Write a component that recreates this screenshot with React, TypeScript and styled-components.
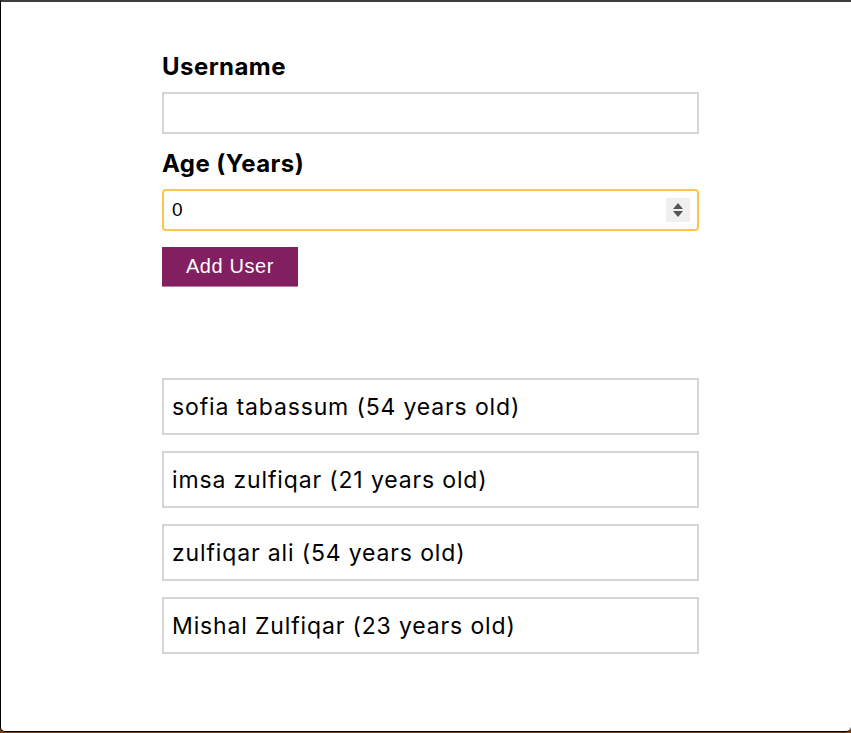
import React from "react";
import styled, { createGlobalStyle } from "styled-components";

const Global = createGlobalStyle`
  html, body { margin: 0; padding: 0; background: #7a3f14; }
  body { font-family: "Inter", "Noto Sans", sans-serif; }
  * { box-sizing: border-box; }
`;

const Frame = styled.div`
  height: 732px;
  background: #ffffff;
  border-top: 2px solid #3d3d3f;
  border-left: 1px solid #000;
  border-bottom: 1px solid #000;
  border-bottom-left-radius: 5px;
  border-bottom-right-radius: 5px;
  padding: 50px 0 0 161px;
`;

const Column = styled.div`
  width: 537px;
`;

const Form = styled.form`
  display: flex;
  flex-direction: column;
`;

const Label = styled.label`
  display: block;
  font-family: "Inter", sans-serif;
  font-weight: 700;
  font-size: 24px;
  line-height: 30px;
  letter-spacing: 0.45px;
  color: #000;
  margin-bottom: 10px;
`;

const TextInput = styled.input<{ $focused?: boolean }>`
  display: block;
  width: 100%;
  height: 42px;
  border: 2px solid ${(p) => (p.$focused ? "#fcc451" : "#d5d5d5")};
  border-radius: ${(p) => (p.$focused ? "4px" : "0")};
  padding: 0 8px;
  font-family: "Liberation Sans", Arial, sans-serif;
  font-size: 19px;
  color: #000;
  background: #fff;
  outline: none;
  margin-bottom: 15px;
`;

const InputWrap = styled.div`
  position: relative;
`;

const Spinner = styled.div`
  position: absolute;
  right: 9px;
  top: 9px;
  width: 24px;
  height: 24px;
  background: #efefef;
  display: flex;
  align-items: center;
  justify-content: center;
`;

const Button = styled.button`
  align-self: flex-start;
  width: 136px;
  height: 40px;
  margin-top: 1px;
  background: #821f61;
  border: none;
  border-bottom: 1px solid #c07aa6;
  color: #fff;
  font-family: "Liberation Sans", Arial, sans-serif;
  font-size: 20px;
  letter-spacing: 0.6px;
  padding: 0;
`;

const List = styled.ul`
  list-style: none;
  margin: 91px 0 0;
  padding: 0;
  display: flex;
  flex-direction: column;
  gap: 16px;
`;

const Item = styled.li`
  height: 57px;
  border: 2px solid #d5d5d5;
  display: flex;
  align-items: center;
  padding: 0 8px;
  font-family: "Inter", sans-serif;
  font-size: 23px;
  letter-spacing: 0.85px;
  color: #000;
`;

const users = [
  { name: "sofia tabassum", age: 54 },
  { name: "imsa zulfiqar", age: 21 },
  { name: "zulfiqar ali", age: 54 },
  { name: "Mishal Zulfiqar", age: 23 },
];

export default function App() {
  return (
    <>
      <Global />
      <Frame>
        <Column>
          <Form onSubmit={(e) => e.preventDefault()}>
            <Label htmlFor="username">Username</Label>
            <TextInput id="username" type="text" />
            <Label htmlFor="age">Age (Years)</Label>
            <InputWrap>
              <TextInput id="age" type="text" $focused defaultValue="0" />
              <Spinner>
                <svg width="12" height="16" viewBox="0 0 12 16">
                  <path d="M6 1 L11 7 L1 7 Z" fill="#555" />
                  <path d="M1 9 L11 9 L6 15 Z" fill="#555" />
                </svg>
              </Spinner>
            </InputWrap>
            <Button type="submit">Add User</Button>
          </Form>
          <List>
            {users.map((u) => (
              <Item key={u.name}>
                {u.name} ({u.age} years old)
              </Item>
            ))}
          </List>
        </Column>
      </Frame>
    </>
  );
}
